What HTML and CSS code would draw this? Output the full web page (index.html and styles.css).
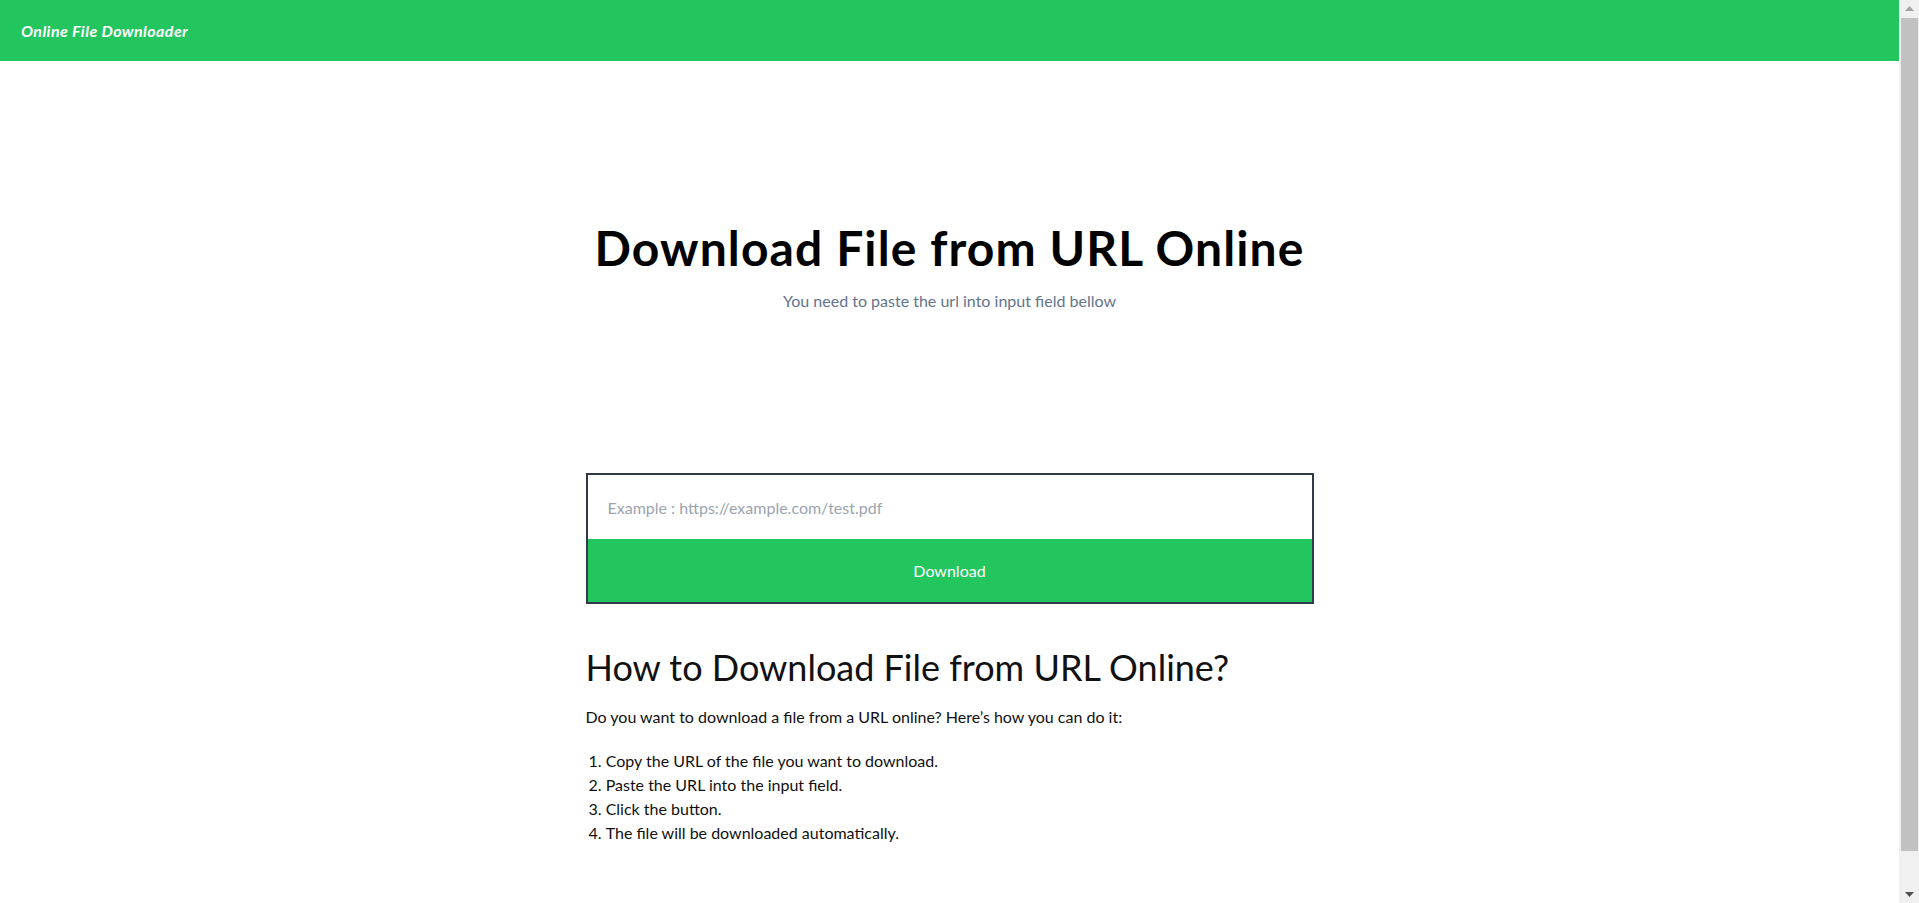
FILE: index.html
```html
<!DOCTYPE html>
<html lang="en">
<head>
<meta charset="utf-8">
<title>Online File Downloader</title>
<link rel="stylesheet" href="styles.css">
</head>
<body>
<div class="viewport">
  <header class="topbar">
    <span class="brand">Online File Downloader</span>
  </header>
  <main class="page">
    <section class="hero">
      <h1 class="hero-title">Download File from URL Online</h1>
      <p class="hero-sub">You need to paste the url into input field bellow</p>
    </section>
    <section class="content">
      <form class="dl-form">
        <input class="dl-input" type="text" placeholder="Example : https://example.com/test.pdf">
        <button class="dl-button" type="button">Download</button>
      </form>
      <h2 class="howto-title">How to Download File from URL Online?</h2>
      <p class="howto-text">Do you want to download a file from a URL online? Here’s how you can do it:</p>
      <ol class="steps">
        <li>Copy the URL of the file you want to download.</li>
        <li>Paste the URL into the input field.</li>
        <li>Click the button.</li>
        <li>The file will be downloaded automatically.</li>
      </ol>
    </section>
  </main>
</div>
<div class="scrollbar" aria-hidden="true">
  <div class="sb-btn">
    <svg width="9" height="5" viewBox="0 0 9 5"><polygon points="4.5,0 9,5 0,5" fill="#a3a3a3"/></svg>
  </div>
  <div class="sb-thumb"></div>
  <div class="sb-space"></div>
  <div class="sb-btn">
    <svg width="9" height="5" viewBox="0 0 9 5"><polygon points="0,0 9,0 4.5,5" fill="#505050"/></svg>
  </div>
</div>
</body>
</html>
```
FILE: styles.css
```css
* { box-sizing: border-box; }
html, body { margin: 0; padding: 0; }
body {
  font-family: "Lato", "Open Sans", sans-serif;
  color: #111111;
  background: #ffffff;
}
.viewport {
  margin-right: 20px;
}
.topbar {
  height: 61px;
  background: #22c55e;
  display: flex;
  align-items: center;
  padding: 0 21px;
}
.brand {
  color: #ffffff;
  font-weight: 700;
  font-style: italic;
  font-size: 16px;
  letter-spacing: 0.4px;
}
.page {
  padding-bottom: 60px;
}
.hero {
  padding-top: 163px;
  text-align: center;
}
.hero-title {
  margin: 0;
  font-size: 48px;
  line-height: 48px;
  font-weight: 700;
  color: #000000;
  letter-spacing: 1.1px;
}
.hero-sub {
  margin: 17px 0 0;
  font-size: 16px;
  line-height: 24px;
  color: #64748b;
}
.content {
  width: 728px;
  margin: 160px auto 0;
}
.dl-form {
  display: flex;
  flex-direction: column;
  border: 2px solid #2f3a4b;
}
.dl-input {
  height: 64px;
  border: 0;
  padding: 0 20px;
  font: inherit;
  font-size: 16px;
  color: #111;
  outline: none;
}
.dl-input::placeholder { color: #9ca3af; }
.dl-button {
  height: 63px;
  border: 0;
  background: #22c55e;
  color: #ffffff;
  font: inherit;
  font-size: 16px;
  cursor: pointer;
}
.howto-title {
  margin: 43px 0 0;
  font-size: 36px;
  line-height: 40px;
  font-weight: 400;
}
.howto-text {
  margin: 18px 0 0;
  font-size: 16px;
  line-height: 24px;
}
.steps {
  margin: 20px 0 0;
  padding: 0;
  list-style: decimal inside;
  font-size: 16px;
  line-height: 24px;
}
.steps li { padding-left: 3px; }

/* imitation of the window scrollbar seen in the screenshot */
.scrollbar {
  position: fixed;
  top: 0;
  right: 0;
  width: 20px;
  height: 100vh;
  background: #f0f0f0;
  display: flex;
  flex-direction: column;
}
.sb-btn {
  height: 17px;
  display: flex;
  align-items: center;
  justify-content: center;
  padding-left: 1px;
}
.sb-thumb {
  height: 833px;
  margin: 1px 1px 0 2px;
  background: #c1c1c1;
}
.sb-space { flex: 1; }
```
